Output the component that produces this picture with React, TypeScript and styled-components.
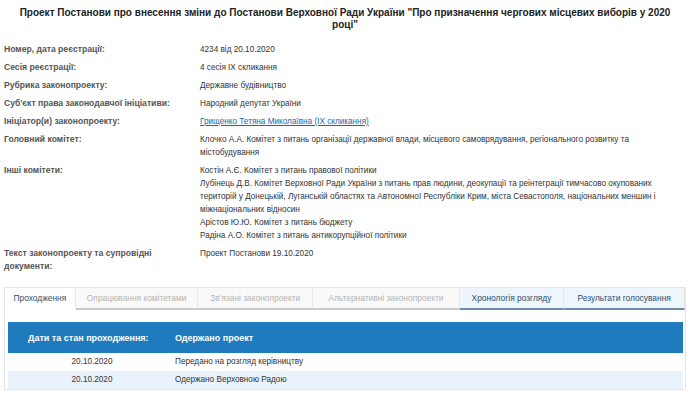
import React from "react";
import styled, { createGlobalStyle } from "styled-components";

const GlobalStyle = createGlobalStyle`
  html, body {
    margin: 0;
    padding: 0;
    background: #ffffff;
  }
  body {
    font-family: "Liberation Sans", Arial, sans-serif;
    color: #333;
  }
`;

const Page = styled.div`
  width: 691px;
  height: 393px;
  overflow: hidden;
  padding: 0 5px 0 4px;
  box-sizing: border-box;
`;

const Title = styled.h1`
  margin: 0;
  padding: 7px 6px 0 6px;
  font-size: 10px;
  line-height: 12px;
  font-weight: bold;
  text-align: center;
  color: #222;
`;

const InfoTable = styled.div`
  display: grid;
  grid-template-columns: 196px 1fr;
  margin-top: 10px;
  line-height: 13px;
`;

const Label = styled.div`
  color: #555;
  font-weight: bold;
  font-size: 8.6px;
  line-height: 13px;
  padding: 2px 20px 3px 0;
`;

const Value = styled.div`
  color: #333;
  font-size: 8.2px;
  line-height: 13px;
  padding: 2px 0 3px 0;
`;

const Line = styled.div`
  line-height: 13px;
`;

const Link = styled.a`
  color: #1a66b0;
  text-decoration: underline;
`;

const TabsBox = styled.div`
  margin-top: 11px;
  border: 1px solid #e6e6e6;
  border-top: none;
`;

const TabBar = styled.div`
  display: flex;
`;

type TabState = "active" | "disabled" | "normal";

const Tab = styled.div<{ $state: TabState }>`
  font-size: 8.4px;
  line-height: 20px;
  padding: 0 8px;
  white-space: nowrap;
  box-sizing: border-box;
  text-align: center;
  color: ${(p) =>
    p.$state === "disabled" ? "#b4b4b4" : p.$state === "active" ? "#34506c" : "#2d4f72"};
  background: ${(p) =>
    p.$state === "active" ? "#ffffff" : p.$state === "normal" ? "#eef5fb" : "#f9f9f9"};
  border-top: 1px solid #e6e6e6;
  border-right: 1px solid #e6e6e6;
  border-bottom: 2px solid
    ${(p) =>
      p.$state === "active" ? "transparent" : p.$state === "normal" ? "#6f8ba6" : "#c9c9c9"};
`;

const Panel = styled.div`
  padding: 12px 2px 0 3px;
`;

const HeadRow = styled.div`
  display: grid;
  grid-template-columns: 167px 1fr;
  background: #1f7bbe;
  color: #fff;
  font-weight: bold;
  font-size: 9px;
  height: 31px;
  align-items: center;
`;

const HeadCell = styled.div<{ $indent?: number }>`
  padding-left: ${(p) => p.$indent ?? 0}px;
`;

const Row = styled.div<{ $alt?: boolean }>`
  display: grid;
  grid-template-columns: 167px 1fr;
  background: ${(p) => (p.$alt ? "#eaf3fb" : "#ffffff")};
  font-size: 8.2px;
  line-height: 18px;
  color: #333;
`;

const DateCell = styled.div`
  text-align: center;
  padding-left: 1px;
`;

const committees = [
  "Костін А.Є. Комітет з питань правової політики",
  "Лубінець Д.В. Комітет Верховної Ради України з питань прав людини, деокупації та реінтеграції тимчасово окупованих територій у Донецькій, Луганській областях та Автономної Республіки Крим, міста Севастополя, національних меншин і міжнаціональних відносин",
  "Арістов Ю.Ю. Комітет з питань бюджету",
  "Радіна А.О. Комітет з питань антикорупційної політики",
];

const tabs: { name: string; state: TabState; width: number }[] = [
  { name: "Проходження", state: "active", width: 71 },
  { name: "Опрацювання комітетами", state: "disabled", width: 123 },
  { name: "Зв'язані законопроекти", state: "disabled", width: 115 },
  { name: "Альтернативні законопроекти", state: "disabled", width: 147 },
  { name: "Хронологія розгляду", state: "normal", width: 105 },
  { name: "Результати голосування", state: "normal", width: 121 },
];

export default function App() {
  return (
    <Page>
      <GlobalStyle />
      <Title>
        Проект Постанови про внесення зміни до Постанови Верховної Ради України "Про призначення
        чергових місцевих виборів у 2020 році"
      </Title>
      <InfoTable>
        <Label>Номер, дата реєстрації:</Label>
        <Value>4234 від 20.10.2020</Value>
        <Label>Сесія реєстрації:</Label>
        <Value>4 сесія IX скликання</Value>
        <Label>Рубрика законопроекту:</Label>
        <Value>Державне будівництво</Value>
        <Label>Суб'єкт права законодавчої ініціативи:</Label>
        <Value>Народний депутат України</Value>
        <Label>Ініціатор(и) законопроекту:</Label>
        <Value>
          <Link>Грищенко Тетяна Миколаївна (IX скликання)</Link>
        </Value>
        <Label>Головний комітет:</Label>
        <Value>
          Клочко А.А. Комітет з питань організації державної влади, місцевого самоврядування,
          регіонального розвитку та містобудування
        </Value>
        <Label>Інші комітети:</Label>
        <Value>
          {committees.map((c) => (
            <Line key={c}>{c}</Line>
          ))}
        </Value>
        <Label>Текст законопроекту та супровідні документи:</Label>
        <Value>Проект Постанови 19.10.2020</Value>
      </InfoTable>
      <TabsBox>
        <TabBar>
          {tabs.map((t) => (
            <Tab key={t.name} $state={t.state} style={{ width: t.width }}>
              {t.name}
            </Tab>
          ))}
        </TabBar>
        <Panel>
          <HeadRow>
            <HeadCell $indent={20}>Дати та стан проходження:</HeadCell>
            <HeadCell>Одержано проект</HeadCell>
          </HeadRow>
          <Row>
            <DateCell>20.10.2020</DateCell>
            <div>Передано на розгляд керівництву</div>
          </Row>
          <Row $alt>
            <DateCell>20.10.2020</DateCell>
            <div>Одержано Верховною Радою</div>
          </Row>
        </Panel>
      </TabsBox>
    </Page>
  );
}
